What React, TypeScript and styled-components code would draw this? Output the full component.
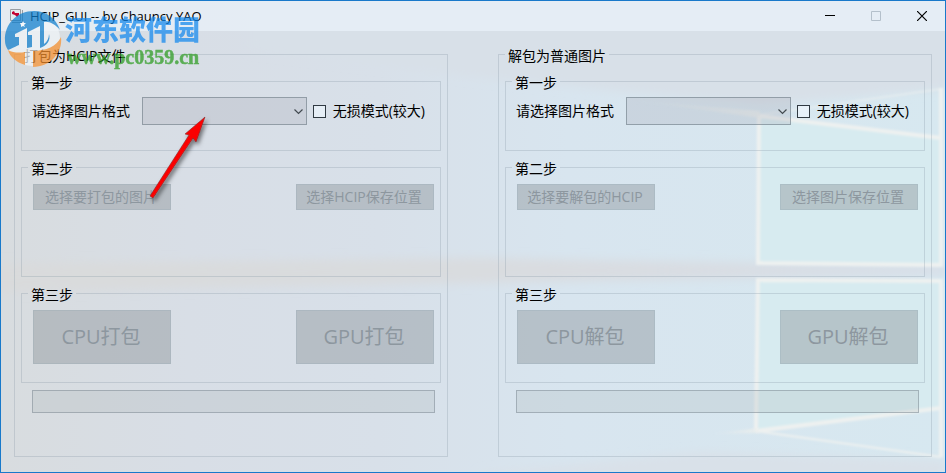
import React from 'react';
import styled, { createGlobalStyle, css } from 'styled-components';

const GlobalStyle = createGlobalStyle`
  *, *::before, *::after { box-sizing: border-box; }
  html, body { margin: 0; padding: 0; }
  body, button, select, input {
    font-family: "Open Sans", "Noto Sans CJK SC", sans-serif;
    font-size: 14px;
    color: #000;
  }
`;

const Window = styled.main`
  position: relative;
  isolation: isolate;
  display: flex;
  flex-direction: column;
  min-height: 100vh;
  border: 1px solid #1979ca;
  background: #d9e1ea;
  overflow: hidden;
`;

const Wallpaper = styled.svg`
  position: absolute;
  inset: 0;
  z-index: -1;
  width: 100%;
  height: 100%;
`;

const TitleBar = styled.header`
  display: flex;
  align-items: center;
  height: 30px;
  padding-left: 8px;
  background: rgba(240, 247, 255, 0.55);
`;

const Title = styled.h1`
  flex: 1;
  margin: 0 0 0 5px;
  font-size: 13px;
  font-weight: 400;
  line-height: 16px;
`;

const CaptionButton = styled.button`
  display: grid;
  place-items: center;
  width: 46px;
  height: 30px;
  padding: 0;
  border: 0;
  background: none;
  color: #000;
  &:disabled { color: #b4c0cb; }
`;

const Panels = styled.div`
  flex: 1;
  display: grid;
  grid-template-columns: 1fr 1fr;
  gap: 50px;
  padding: 14px 13px 15px;
`;

const Group = styled.fieldset`
  min-width: 0;
  margin: 0;
  border: 1px solid rgba(130, 148, 160, 0.28);
`;

const Panel = styled(Group)`
  display: flex;
  flex-direction: column;
  padding: 8px 6px 0;
`;

const Step = styled(Group)<{ $size: 'small' | 'medium' | 'large' }>`
  padding: 6px 6px 0 10px;
  margin-bottom: 7px;
  min-height: ${({ $size }) => ({ small: 79, medium: 119, large: 99 })[$size]}px;
`;

const Legend = styled.legend<{ $outer?: boolean }>`
  height: 19px;
  margin-left: ${({ $outer }) => ($outer ? 0 : -4)}px;
  padding: 2px 3px 0;
  line-height: 18px;
`;

const Row = styled.div<{ $spread?: boolean }>`
  display: flex;
  align-items: center;
  ${({ $spread }) => $spread && css`justify-content: space-between; padding: 1px 0 0 1px;`}
`;

const FormatLabel = styled.label`
  margin-right: 12px;
  line-height: 20px;
`;

const SelectBox = styled.span`
  position: relative;
  flex: 1;
  display: flex;
`;

const Select = styled.select`
  appearance: none;
  width: 100%;
  height: 28px;
  border: 1px solid rgba(90, 105, 115, 0.5);
  border-radius: 0;
  background: rgba(160, 165, 175, 0.25);
`;

const Chevron = styled.svg`
  position: absolute;
  right: 4px;
  top: 12px;
  pointer-events: none;
`;

const CheckLabel = styled.label`
  display: flex;
  align-items: center;
  gap: 7px;
  margin: 0 9px 0 6px;
  line-height: 20px;
  white-space: nowrap;
`;

const Checkbox = styled.input`
  appearance: none;
  width: 13px;
  height: 13px;
  margin: 0;
  border: 1px solid #303a42;
  background: rgba(240, 248, 255, 0.6);
`;

const ActionButton = styled.button<{ $big?: boolean }>`
  width: 138px;
  height: ${({ $big }) => ($big ? 54 : 26)}px;
  padding: 0 2px 0 0;
  border: 1px solid rgba(120, 135, 145, 0.45);
  background: rgba(125, 132, 138, 0.37);
  background-clip: padding-box;
  font-size: ${({ $big }) => ($big ? 20 : 14)}px;
  line-height: 20px;
  white-space: nowrap;
  &:disabled { color: #8d979f; }
`;

const Progress = styled.div`
  height: 23px;
  margin: 0 6px 0 11px;
  border: 1px solid rgba(110, 125, 135, 0.45);
  background: rgba(160, 170, 170, 0.2);
`;

const Overlay = styled.svg`
  position: absolute;
  left: -1px;
  top: -1px;
  pointer-events: none;
`;

function Scene() {
  return (
    <Wallpaper viewBox="1 1 944 471" preserveAspectRatio="none" aria-hidden="true">
      <defs>
        <linearGradient id="sky" x1="0" x2="1">
          <stop offset="0" stopColor="#d8dcdf" />
          <stop offset="0.2" stopColor="#d8dee6" />
          <stop offset="0.4" stopColor="#d8e0e9" />
          <stop offset="0.6" stopColor="#d8e5ef" />
          <stop offset="1" stopColor="#d7e8f0" />
        </linearGradient>
        <linearGradient id="band" x1="0" x2="1">
          <stop offset="0" stopColor="#d9dadb" />
          <stop offset="0.5" stopColor="#d9dcdf" />
          <stop offset="1" stopColor="#d8dee7" />
        </linearGradient>
        <linearGradient id="ray" x1="0" x2="1">
          <stop offset="0" stopColor="#eaeeed" stopOpacity="0" />
          <stop offset="1" stopColor="#edefed" />
        </linearGradient>
        <filter id="soft" x="-20%" y="-50%" width="140%" height="200%"><feGaussianBlur stdDeviation="5" /></filter>
        <filter id="glow" x="-5%" y="-5%" width="110%" height="110%"><feGaussianBlur stdDeviation="1" /></filter>
      </defs>
      <rect width="946" height="473" fill="url(#sky)" />
      <path d="M250 -20H960V88L760 105L480 78L250 50Z" fill="#d8e0e8" filter="url(#soft)" />
      <path d="M-20 264L480 258L960 266V275L480 283L-20 292Z" fill="url(#band)" filter="url(#soft)" />
      <path d="M480 473L700 452L946 460V490H480Z" fill="#d9e1e9" filter="url(#soft)" />
      <path d="M758 116L942 137V264H758ZM758 280H942V410L758 430Z" fill="#d7ebf0" />
      <g fill="none" stroke="#eef1f0" strokeWidth="4" filter="url(#glow)">
        <path d="M759 116L758 263L941 265V88M759 116L941 138" />
        <path d="M756 430L758 280L941 281V457" />
        <path d="M756 431L941 408" />
        <path d="M756 431L941 457" strokeWidth="2" />
        <path d="M758 115L941 89" strokeWidth="1" />
      </g>
      <path d="M630 100L760 111V118Z" fill="url(#ray)" filter="url(#glow)" opacity="0.7" />
      <path d="M710 434L758 428V433Z" fill="url(#ray)" filter="url(#glow)" opacity="0.8" />
    </Wallpaper>
  );
}

function AppIcon() {
  return (
    <svg width="16" height="16" viewBox="0 0 16 16" aria-hidden="true">
      <path d="M1.500 1.500H11.500V12.500H1.500ZM13.500 2V14.500H3" fill="#e5eaed" stroke="#979da3" />
      <path d="M3 4L5 3L6 5L10 5V7L8 9L6 7L3 6Z" fill="#c3002f" />
    </svg>
  );
}

interface PanelProps {
  id: string;
  title: string;
  source: string;
  target: string;
  cpu: string;
  gpu: string;
}

function ConvertPanel({ id, title, source, target, cpu, gpu }: PanelProps) {
  return (
    <Panel>
      <Legend $outer>{title}</Legend>
      <Step $size="small">
        <Legend>第一步</Legend>
        <Row>
          <FormatLabel htmlFor={`${id}-format`}>请选择图片格式</FormatLabel>
          <SelectBox>
            <Select id={`${id}-format`} />
            <Chevron width="9" height="6" viewBox="0 0 9 6" aria-hidden="true">
              <path d="M0.500 0.500L4.500 4.500L8.500 0.500" fill="none" stroke="#424a50" strokeWidth="1.200" />
            </Chevron>
          </SelectBox>
          <CheckLabel>
            <Checkbox type="checkbox" />
            无损模式(较大)
          </CheckLabel>
        </Row>
      </Step>
      <Step $size="medium">
        <Legend>第二步</Legend>
        <Row $spread>
          <ActionButton disabled>{source}</ActionButton>
          <ActionButton disabled>{target}</ActionButton>
        </Row>
      </Step>
      <Step $size="large">
        <Legend>第三步</Legend>
        <Row $spread>
          <ActionButton $big disabled>{cpu}</ActionButton>
          <ActionButton $big disabled>{gpu}</ActionButton>
        </Row>
      </Step>
      <Progress role="progressbar" aria-label={title} aria-valuenow={0} />
    </Panel>
  );
}

function Watermark() {
  return (
    <Overlay width="210" height="76" viewBox="0 0 210 76" aria-hidden="true">
      <g opacity="0.72">
        <circle cx="33" cy="39" r="27" fill="#f2f6f9" />
        <path d="M5 41C4 24 17 11 34 11C46 11 56 18 60 30C55 24 49 21 44 22V44C47 42 49 38 49 34C51 40 47 46 40 48V26L28 32V35H32V47L27 48V28L15 34V37H19V45C14 47 9 50 8 50C6 47 5 44 5 41Z" fill="#0f7fce" />
        <path d="M61 37C63 53 50 67 33 67V51C46 51 57 46 61 37ZM8 50C13 53 20 53 25 52V65C16 62 10 57 8 50Z" fill="#f9922f" />
        <path d="M23 21L24 23L26 23L24 25L25 27L23 26L21 27L21 25L20 23L22 23Z" fill="#fff" />
        <text x="65" y="40" fontSize="27" fontWeight="900" fontFamily="'Noto Sans CJK SC', sans-serif" fill="#1188ee">河东软件园</text>
        <text x="67" y="64" fontSize="20" fontWeight="700" fontFamily="'Liberation Serif', serif" fill="#2a9b1e" stroke="#2a9b1e" strokeWidth="0.500">www.pc0359.cn</text>
      </g>
    </Overlay>
  );
}

function Arrow() {
  return (
    <Overlay width="230" height="215" viewBox="0 0 230 215" aria-hidden="true">
      <defs>
        <filter id="shade"><feDropShadow dx="2" dy="3" stdDeviation="2" floodOpacity="0.5" /></filter>
      </defs>
      <path d="M205 117L196 142L193 138L153 198L150 196L189 135L185 134Z" fill="#fb0505" stroke="#7a2020" strokeWidth="0.500" filter="url(#shade)" />
    </Overlay>
  );
}

export default function App() {
  return (
    <>
      <GlobalStyle />
      <Window>
        <Scene />
        <TitleBar>
          <AppIcon />
          <Title>HCIP_GUI -- by Chauncy YAO</Title>
          <CaptionButton aria-label="最小化">
            <svg width="10" height="10"><path d="M0 4.500H10" stroke="currentColor" /></svg>
          </CaptionButton>
          <CaptionButton aria-label="最大化" disabled>
            <svg width="10" height="10"><path d="M0.500 0.500H9.500V9.500H0.500Z" fill="none" stroke="currentColor" /></svg>
          </CaptionButton>
          <CaptionButton aria-label="关闭">
            <svg width="10" height="10"><path d="M0 0L10 10M10 0L0 10" stroke="currentColor" strokeWidth="1.200" /></svg>
          </CaptionButton>
        </TitleBar>
        <Panels>
          <ConvertPanel id="pack" title="打包为HCIP文件" source="选择要打包的图片" target="选择HCIP保存位置" cpu="CPU打包" gpu="GPU打包" />
          <ConvertPanel id="unpack" title="解包为普通图片" source="选择要解包的HCIP" target="选择图片保存位置" cpu="CPU解包" gpu="GPU解包" />
        </Panels>
        <Arrow />
        <Watermark />
      </Window>
    </>
  );
}
